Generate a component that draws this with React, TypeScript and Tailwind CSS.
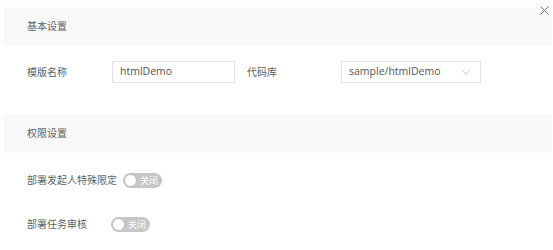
import React from "react";

const Toggle = () => {
  return (
    <div className="flex items-center w-[39px] h-[15px] rounded-full bg-[#c6c6c6] p-[1px]">
      <span className="w-[13px] h-[13px] rounded-full bg-white border border-[#bdbdbd]" />
      <span className="ml-[3px] text-[9px] leading-none text-white">关闭</span>
    </div>
  );
};

const App = () => {
  return (
    <div
      className="relative w-[553px] h-[250px] bg-white pl-1 pt-[7px] pr-[1px] text-[10px] text-[#5f5f5f]"
      style={{ fontFamily: '"Open Sans", "Noto Sans CJK SC", sans-serif' }}
    >
      <button className="absolute right-[4px] top-[6px] w-[9px] h-[9px] text-[#777]">
        <svg viewBox="0 0 9 9" className="w-[9px] h-[9px] block" fill="none" stroke="currentColor" strokeWidth="1">
          <path d="M0.5 0.5 L8.5 8.5 M8.5 0.5 L0.5 8.5" />
        </svg>
      </button>

      <div className="flex items-center h-[39px] bg-[#f8f8f8] pl-[23px]">基本设置</div>

      <div className="flex items-center h-[22px] mt-[15px] pl-[23px]">
        <span className="w-[85px]">模版名称</span>
        <div className="flex items-center w-[123px] h-[22px] border border-[#e2e2e2] px-[7px] text-[10.5px] text-[#555]">
          htmlDemo
        </div>
        <span className="ml-[12px] w-[94px]">代码库</span>
        <div className="flex items-center justify-between w-[140px] h-[22px] border border-[#e2e2e2] pl-[7px] pr-[10px] text-[10.5px] text-[#555]">
          <span>sample/htmlDemo</span>
          <svg viewBox="0 0 8 5" className="w-[8px] h-[5px]" fill="none" stroke="#b8b8b8" strokeWidth="0.8">
            <path d="M0.5 0.5 L4 4.3 L7.5 0.5" />
          </svg>
        </div>
      </div>

      <div className="flex items-center h-[39px] bg-[#f8f8f8] pl-[23px] mt-[31px]">权限设置</div>

      <div className="flex items-center h-[22px] mt-[16px] pl-[23px]">
        <span className="min-w-[78px] mr-[6px]">部署发起人特殊限定</span>
        <Toggle />
      </div>

      <div className="flex items-center h-[22px] mt-[22px] pl-[23px]">
        <span className="min-w-[78px] mr-[6px]">部署任务审核</span>
        <Toggle />
      </div>
    </div>
  );
};

export default App;
